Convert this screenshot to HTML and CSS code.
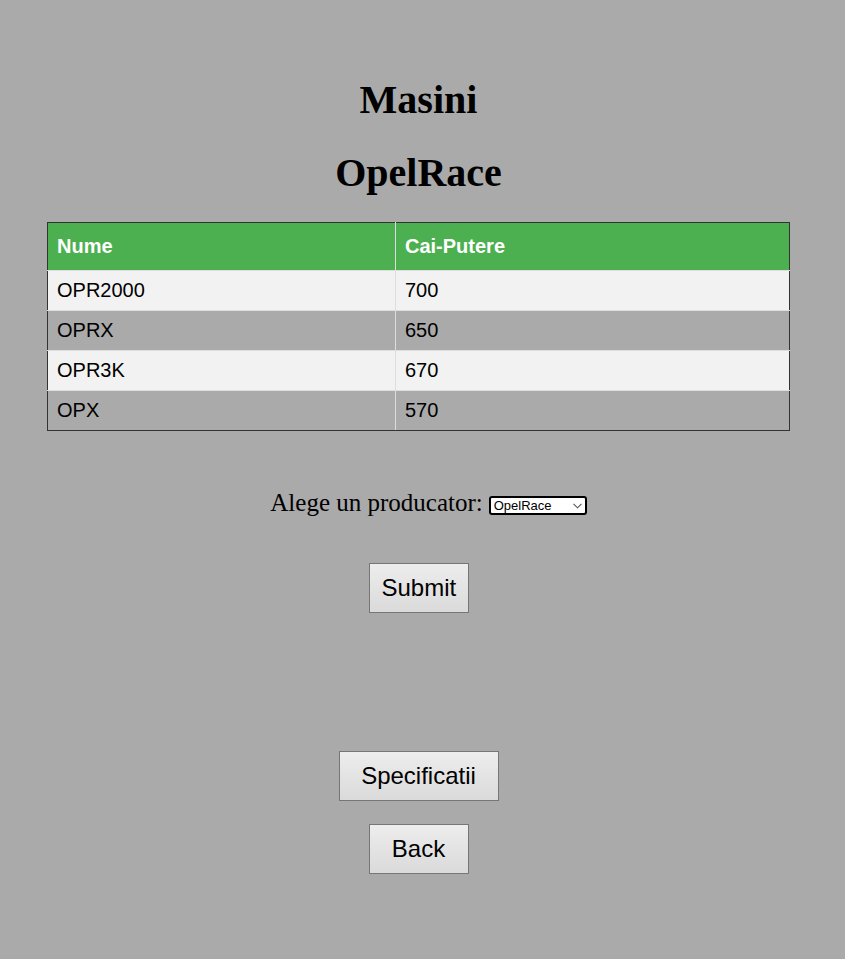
FILE: index.html
```html
<!DOCTYPE html>
<html>
<head>
<meta charset="utf-8">
<title>Masini</title>
<link rel="stylesheet" href="styles.css">
</head>
<body>
<div class="page">
  <h1 class="title">Masini</h1>
  <h1 class="title title-sub">OpelRace</h1>
  <table class="cars">
    <thead>
      <tr><th class="col-name">Nume</th><th>Cai-Putere</th></tr>
    </thead>
    <tbody>
      <tr><td>OPR2000</td><td>700</td></tr>
      <tr><td>OPRX</td><td>650</td></tr>
      <tr><td>OPR3K</td><td>670</td></tr>
      <tr><td>OPX</td><td>570</td></tr>
    </tbody>
  </table>
  <form class="pick">
    <div class="pick-row">
      <label class="pick-label" for="prod">Alege un producator:</label>
      <span class="select-wrap">
        <select id="prod" class="pick-select">
          <option>OpelRace</option>
        </select>
        <svg class="chev" width="9" height="6" viewBox="0 0 9 6"><path d="M0.5 0.8 L4.5 4.8 L8.5 0.8" fill="none" stroke="#555" stroke-width="1.1"/></svg>
      </span>
    </div>
    <button type="button" class="btn btn-submit">Submit</button>
  </form>
  <div class="actions">
    <button type="button" class="btn">Specificatii</button>
    <button type="button" class="btn">Back</button>
  </div>
</div>
</body>
</html>
```
FILE: styles.css
```css
html, body {
  background: #aaaaaa;
}
body {
  margin: 8px 16px 8px 8px;
  font-family: "Liberation Serif", "Times New Roman", serif;
  color: #000;
}
.page {
  padding-top: 42px;
  display: flex;
  flex-direction: column;
  align-items: center;
}
.title {
  font-size: 40px;
  font-weight: bold;
  margin: 27px 0;
  line-height: 46px;
}
.title-sub {
  margin-top: 0;
}
.cars {
  width: 743px;
  border-collapse: collapse;
  border: 1px solid #333;
  font-family: "Liberation Sans", Arial, sans-serif;
  font-size: 20px;
  margin-top: -1px;
}
.cars th, .cars td {
  border: 1px solid #ddd;
  text-align: left;
  padding: 8px 9px;
  line-height: 23px;
}
.cars th {
  background: #4caf50;
  color: #fff;
  padding-top: 12px;
  padding-bottom: 12px;
  font-weight: bold;
}
.cars th:first-child, .cars td:first-child { border-left-color: #333; }
.cars th:last-child, .cars td:last-child { border-right-color: #333; }
.cars thead th { border-top-color: #333; }
.cars tbody tr:last-child td { border-bottom-color: #333; }
.col-name {
  width: 329px;
}
.cars tbody tr:nth-child(odd) td {
  background: #f2f2f2;
}
.cars tbody tr:nth-child(even) td {
  background: #aaaaaa;
}
.pick {
  margin-top: 58px;
  display: flex;
  flex-direction: column;
  align-items: center;
}
.pick-row {
  display: flex;
  align-items: center;
  gap: 6px;
  height: 28px;
  padding-left: 20px;
}
.pick-label {
  font-size: 25px;
  line-height: 28px;
}
.select-wrap {
  position: relative;
  display: inline-block;
  margin-top: 5px;
  height: 19px;
}
.pick-select {
  appearance: none;
  -webkit-appearance: none;
  font-family: "Liberation Sans", Arial, sans-serif;
  font-size: 13px;
  width: 98px;
  height: 19px;
  border: 2px solid #000;
  border-radius: 3px;
  background: #fff;
  padding: 0 0 0 3px;
  color: #000;
  display: block;
  box-sizing: border-box;
}
.chev {
  position: absolute;
  right: 5px;
  top: 7px;
  pointer-events: none;
}
.btn {
  font-family: "Liberation Sans", Arial, sans-serif;
  font-size: 24px;
  height: 50px;
  padding: 0 12px;
  border: 1px solid #767676;
  border-radius: 0;
  background: linear-gradient(#ededed, #dadada);
  color: #000;
}
.btn-submit {
  margin-top: 46px;
  width: 100px;
}
.actions {
  margin-top: 138px;
  display: flex;
  flex-direction: column;
  align-items: center;
  gap: 23px;
}
.actions .btn:first-child { width: 160px; }
.actions .btn:last-child { width: 100px; }
```
